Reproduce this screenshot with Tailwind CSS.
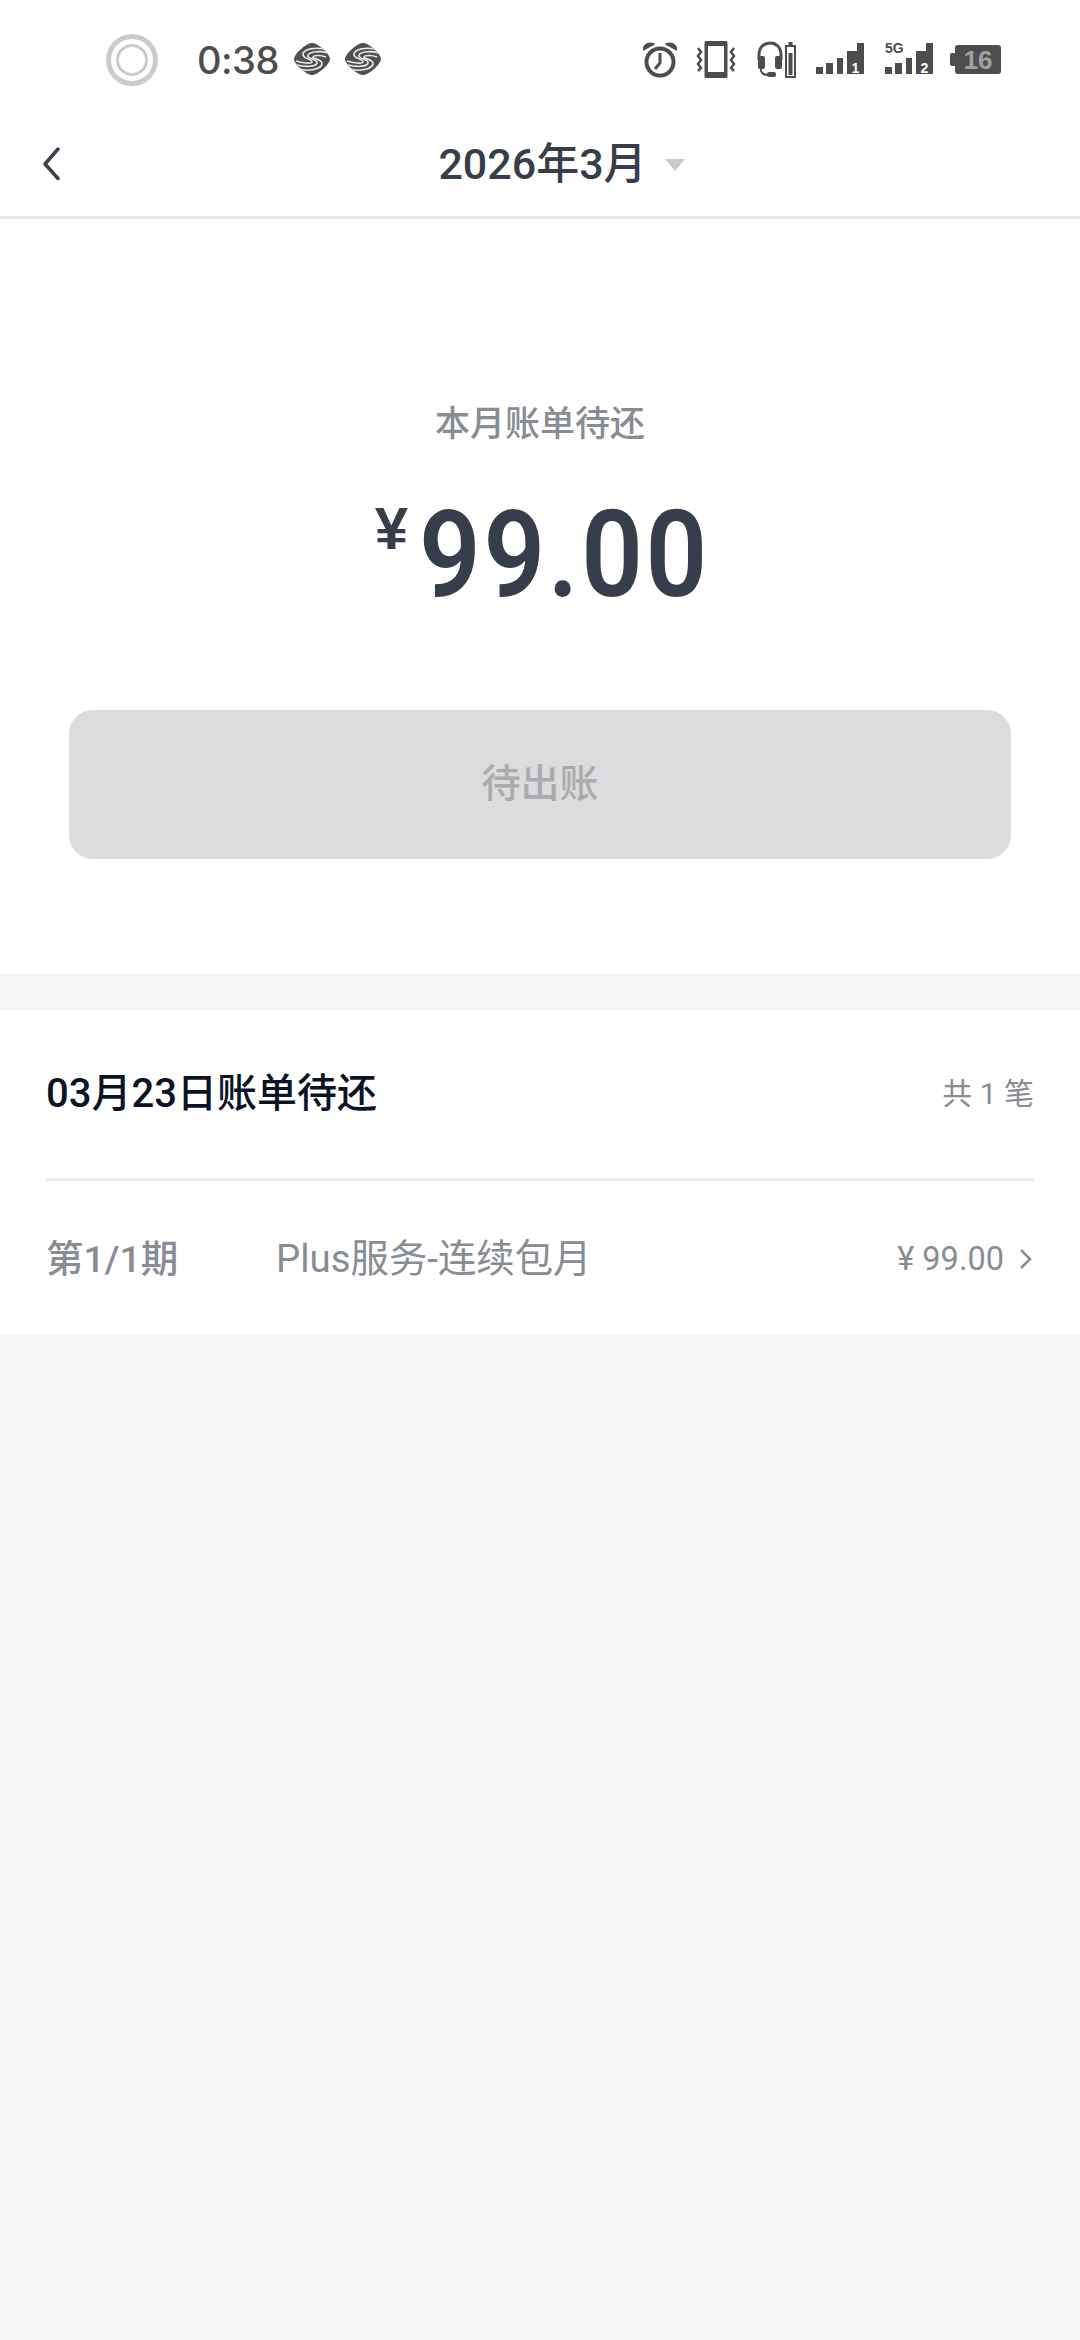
<!DOCTYPE html>
<html lang="zh-CN">
<head>
<meta charset="utf-8">
<script src="https://cdn.jsdelivr.net/npm/@tailwindcss/browser@4"></script>
</head>
<body class="m-0 bg-[#f4f6f5]">
<div class="w-[1080px] h-[2340px] flex flex-col bg-[#f4f6f5] font-['Roboto','Noto_Sans_CJK_SC',sans-serif] overflow-hidden">

  <!-- status bar -->
  <div class="h-[120px] bg-white flex items-center shrink-0 pl-[106px]">
    <svg width="52" height="52" viewBox="0 0 52 52" class="shrink-0"><circle cx="26" cy="26" r="23.5" fill="none" stroke="#cccccc" stroke-width="5"/><circle cx="26" cy="26" r="14.5" fill="none" stroke="#cccccc" stroke-width="3"/></svg>
    <span class="ml-[39px] w-[83px] text-[38px] leading-none font-medium text-[#4d4d4d] font-['Inter','Roboto',sans-serif] tracking-[-0.5px]">0:38</span>
    <svg width="36" height="32" viewBox="0 0 36 32" class="ml-[14px] -mt-[2px] shrink-0">
      <defs><clipPath id="cm1"><path d="M18 0C24 0 36 11 36 16C36 21 24 32 18 32C12 32 0 21 0 16C0 11 12 0 18 0Z"/></clipPath></defs>
      <g clip-path="url(#cm1)"><rect width="36" height="32" fill="#505050"/><g fill="none" stroke="#e8e8e8" stroke-width="1.600"><path d="M34 10C27 8 16 8 14 12C12 16 24 16 23 20C22 24 11 24 3 22"/><path d="M32 14C27 12 20 12 19 14C18 16 29 16 28 21C27 26 14 29 6 26"/><path d="M30 6C21 4 10 6 9 11C8 16 19 16 18 19C17 21 8 20 2 18"/></g></g>
    </svg>
    <svg width="36" height="32" viewBox="0 0 36 32" class="ml-[15px] -mt-[2px] shrink-0">
      <defs><clipPath id="cm2"><path d="M18 0C24 0 36 11 36 16C36 21 24 32 18 32C12 32 0 21 0 16C0 11 12 0 18 0Z"/></clipPath></defs>
      <g clip-path="url(#cm2)"><rect width="36" height="32" fill="#505050"/><g fill="none" stroke="#e8e8e8" stroke-width="1.600"><path d="M34 10C27 8 16 8 14 12C12 16 24 16 23 20C22 24 11 24 3 22"/><path d="M32 14C27 12 20 12 19 14C18 16 29 16 28 21C27 26 14 29 6 26"/><path d="M30 6C21 4 10 6 9 11C8 16 19 16 18 19C17 21 8 20 2 18"/></g></g>
    </svg>
    <div class="flex-1"></div>
    <!-- alarm -->
    <svg width="34" height="36" viewBox="0 0 34 36" class="shrink-0">
      <circle cx="17" cy="20" r="13.500" fill="none" stroke="#4d4d4d" stroke-width="4"/>
      <path d="M17 11V21L12 27" fill="none" stroke="#4d4d4d" stroke-width="3"/>
      <path d="M0 8C1 2 6 0 11 2ZM34 8C33 2 28 0 23 2Z" fill="#4d4d4d" stroke="#4d4d4d" stroke-width="1.500" stroke-linejoin="round"/>
    </svg>
    <!-- vibrate -->
    <svg width="40" height="38" viewBox="0 0 40 38" class="ml-[19px] shrink-0">
      <path fill-rule="evenodd" d="M10 0H30A1.500 1.500 0 0 1 31.500 1.500V35.500A1.500 1.500 0 0 1 30 37H10A1.500 1.500 0 0 1 8.500 35.500V1.500A1.500 1.500 0 0 1 10 0ZM12 5V31H28V5Z" fill="#4d4d4d"/>
      <g fill="none" stroke="#4d4d4d" stroke-width="2.500"><path d="M2 7L5 11L2 15L5 19L2 23L5 27L2 30"/><path d="M38 7L35 11L38 15L35 19L38 23L35 27L38 30"/></g>
    </svg>
    <!-- headset + mini battery -->
    <svg width="41" height="38" viewBox="0 0 41 38" class="ml-[20px] shrink-0">
      <path d="M3 19V14C3 6 8 2 14 2C20 2 25 6 25 14V19" fill="none" stroke="#4d4d4d" stroke-width="3"/>
      <rect x="2" y="15" width="7" height="13" rx="2" fill="#4d4d4d"/><rect x="19" y="15" width="7" height="13" rx="2" fill="#4d4d4d"/>
      <path d="M5 27C4 32 8 34 12 34" fill="none" stroke="#4d4d4d" stroke-width="2"/><rect x="11" y="31" width="9" height="5" rx="2" fill="#4d4d4d"/>
      <rect x="30" y="5" width="9" height="31" fill="none" stroke="#4d4d4d" stroke-width="2"/><rect x="32.500" y="1" width="4" height="4" fill="#4d4d4d"/><rect x="32.500" y="12" width="4" height="22" fill="#4d4d4d"/>
    </svg>
    <!-- signal 1 -->
    <svg width="48" height="31" viewBox="0 0 48 31" class="ml-[19px] -mt-[3px] shrink-0 overflow-visible">
      <path d="M0 24H7V31H0ZM10 20H17V31H10ZM21 15H27V31H21ZM31 8H41V0H48V31H31Z" fill="#4d4d4d"/>
      <text x="39.500" y="30" text-anchor="middle" font-family="Liberation Sans" font-weight="700" font-size="14" fill="#fff">1</text>
    </svg>
    <!-- signal 2 -->
    <svg width="48" height="31" viewBox="0 0 48 31" class="ml-[21px] -mt-[3px] shrink-0 overflow-visible">
      <text x="0" y="10" font-family="Liberation Sans" font-weight="700" font-size="14" fill="#4d4d4d">5G</text>
      <path d="M0 24H7V31H0ZM10 20H17V31H10ZM21 15H27V31H21ZM31 8H41V0H48V31H31Z" fill="#4d4d4d"/>
      <text x="39.500" y="30" text-anchor="middle" font-family="Liberation Sans" font-weight="700" font-size="14" fill="#fff">2</text>
    </svg>
    <!-- battery -->
    <svg width="51" height="29" viewBox="0 0 51 29" class="ml-[17px] mr-[79px] -mt-[1px] shrink-0 overflow-visible">
      <rect x="5" y="0" width="46" height="29" rx="3" fill="#4d4d4d"/><rect x="0" y="8" width="6" height="13" rx="2" fill="#4d4d4d"/>
      <text x="28" y="24" text-anchor="middle" font-family="Liberation Sans" font-weight="700" font-size="26" fill="#a0a0a0">16</text>
    </svg>
  </div>

  <!-- nav -->
  <div class="h-[100px] -mt-[1px] pb-[7px] bg-white border-b-[3px] border-[#e8e8ec] relative flex items-center justify-center shrink-0">
    <svg width="18" height="34" viewBox="0 0 18 34" class="absolute left-[42px] top-[28px]"><path d="M16 2L3 17L16 31.500" fill="none" stroke="#3a404c" stroke-width="3.500" stroke-linecap="round" stroke-linejoin="round"/></svg>
    <span class="ml-[43px] text-[43px] leading-none font-medium text-[#373d4a]">2026年3月</span>
    <span class="ml-[18px] mt-[2px] w-0 h-0 border-x-[10px] border-x-transparent border-t-[12px] border-t-[#c9cacd]"></span>
  </div>

  <!-- hero -->
  <div class="h-[755px] bg-white flex flex-col items-center shrink-0 pt-[184px]">
    <div class="text-[35px] leading-[44px] font-medium text-[#888c93]">本月账单待还</div>
    <div class="mt-[53px] h-[110px] flex items-start text-[#373d4a]">
      <span class="text-[60px] leading-none font-bold font-['Liberation_Sans',sans-serif] -mt-[1px] mr-[11px]">¥</span>
      <span class="text-[120px] leading-[110px] font-semibold tracking-[3px] scale-x-[0.9] origin-left w-[286px] whitespace-nowrap">99.00</span>
    </div>
    <div class="mt-[100px] w-[942px] h-[149px] rounded-[24px] bg-[#dcdcde] flex items-center justify-center text-[39px] font-medium text-[#aaabad]">待出账</div>
  </div>

  <div class="h-[36px] shrink-0"></div>

  <!-- list -->
  <div class="h-[325px] bg-white px-[46px] flex flex-col shrink-0">
    <div class="h-[171px] flex items-center justify-between border-b-[3px] border-[#ececee] pb-[1px]">
      <span class="text-[40px] font-medium text-[#0b1426]">03月23日账单待还</span>
      <span class="text-[30px] text-[#888c93]">共 1 笔</span>
    </div>
    <div class="flex-1 flex items-center pt-[2px]">
      <span class="w-[230px] text-[37.500px] font-medium text-[#888c93]">第1/1期</span>
      <span class="flex-1 text-[38.400px] text-[#888c93]">Plus服务-连续包月</span>
      <span class="text-[32.500px] text-[#888c93]">¥ 99.00</span>
      <svg width="14" height="22" viewBox="0 0 14 22" class="ml-[15px] mr-[1px]"><path d="M2 2L11 11L2 20" fill="none" stroke="#888c93" stroke-width="2.500"/></svg>
    </div>
  </div>
</div>
</body>
</html>
